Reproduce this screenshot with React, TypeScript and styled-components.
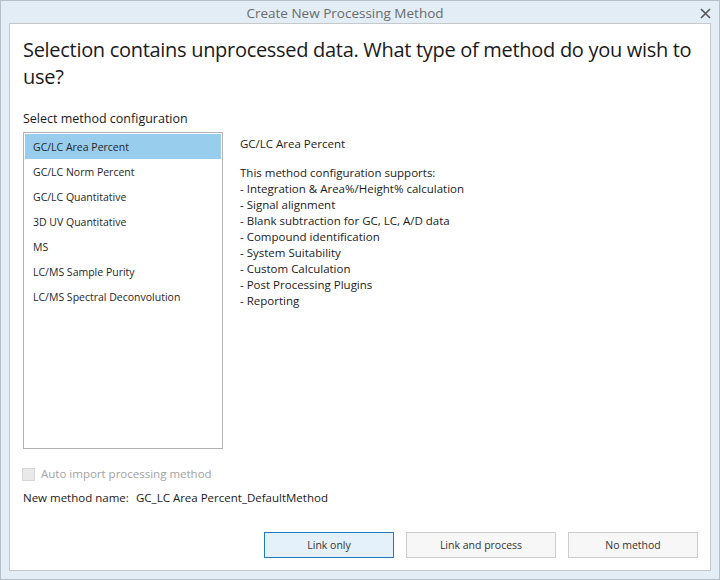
import React, { useState } from "react";
import styled, { createGlobalStyle } from "styled-components";

const GlobalStyle = createGlobalStyle`
  html, body {
    margin: 0;
    padding: 0;
    background: #ffffff;
  }
  body {
    font-family: "Open Sans", "Noto Sans", "DejaVu Sans", sans-serif;
    color: #1e1e1e;
  }
`;

const Window = styled.div`
  width: 720px;
  height: 580px;
  box-sizing: border-box;
  border: 1px solid #b7c0c8;
  background: #e2edf5;
  display: flex;
  flex-direction: column;
`;

const TitleBar = styled.div`
  height: 22px;
  flex: none;
  position: relative;
  display: flex;
  align-items: center;
  justify-content: center;
  padding-right: 30px;
  padding-top: 1px;
  box-sizing: border-box;
  font-size: 13.5px;
  color: #6b6b6b;
`;

const CloseButton = styled.button`
  position: absolute;
  right: 7px;
  top: 6px;
  width: 13px;
  height: 13px;
  padding: 0;
  border: none;
  background: transparent;
  display: flex;
  align-items: center;
  justify-content: center;
  cursor: pointer;
`;

const Panel = styled.div`
  flex: 1;
  margin: 0 8px 8px 8px;
  border: 1px solid #c6c9cc;
  background: #ffffff;
  display: flex;
  flex-direction: column;
  padding: 12px 12px 12px 13px;
`;

const Heading = styled.h1`
  margin: 0;
  font-size: 20px;
  font-weight: 400;
  line-height: 27px;
  color: #1a1a1a;
  letter-spacing: -0.3px;
`;

const SectionLabel = styled.div`
  margin-top: 20px;
  font-size: 12.5px;
  line-height: 18px;
  color: #1a1a1a;
`;

const Columns = styled.div`
  display: flex;
  gap: 17px;
  margin-top: 4px;
`;

const ListBox = styled.ul`
  list-style: none;
  margin: 0;
  width: 200px;
  height: 317px;
  box-sizing: border-box;
  border: 1px solid #b3b3b3;
  padding: 1px;
  flex: none;
`;

const ListItem = styled.li<{ $selected?: boolean }>`
  height: 25px;
  display: flex;
  align-items: center;
  padding-left: 8px;
  font-size: 10.5px;
  color: #262626;
  background: ${(p) => (p.$selected ? "#99cdee" : "transparent")};
  cursor: default;
`;

const Description = styled.div`
  padding-top: 4px;
  font-size: 11.5px;
  line-height: 16px;
  color: #1a1a1a;
`;

const DescTitle = styled.div`
  margin-bottom: 13px;
`;

const CheckRow = styled.label`
  display: flex;
  align-items: center;
  gap: 6px;
  margin-top: 17px;
  margin-left: -1px;
  font-size: 11.5px;
  line-height: 16px;
  color: #a3a3a3;
`;

const CheckBox = styled.span`
  width: 11px;
  height: 11px;
  border: 1px solid #d6d6d6;
  background: #e9e9e9;
  flex: none;
`;

const NameRow = styled.div`
  display: flex;
  margin-top: 8px;
  font-size: 11.5px;
  line-height: 16px;
  color: #1a1a1a;
`;

const NameLabel = styled.span`
  width: 113px;
  flex: none;
`;

const ButtonBar = styled.div`
  margin-top: auto;
  display: flex;
  justify-content: flex-end;
  gap: 12px;
`;

const DialogButton = styled.button<{ $primary?: boolean; $w: number }>`
  width: ${(p) => p.$w}px;
  height: 26px;
  box-sizing: border-box;
  font-family: inherit;
  font-size: 10.5px;
  color: #333333;
  background: ${(p) => (p.$primary ? "#e4f1fa" : "#f7f7f7")};
  border: 1px solid ${(p) => (p.$primary ? "#1f7bc1" : "#cdcdcd")};
  padding: 0;
  cursor: pointer;
`;

const methods = [
  "GC/LC Area Percent",
  "GC/LC Norm Percent",
  "GC/LC Quantitative",
  "3D UV Quantitative",
  "MS",
  "LC/MS Sample Purity",
  "LC/MS Spectral Deconvolution",
];

const features = [
  "Integration & Area%/Height% calculation",
  "Signal alignment",
  "Blank subtraction for GC, LC, A/D data",
  "Compound identification",
  "System Suitability",
  "Custom Calculation",
  "Post Processing Plugins",
  "Reporting",
];

const App: React.FC = () => {
  const [selected, setSelected] = useState(0);

  return (
    <>
      <GlobalStyle />
      <Window>
        <TitleBar>
          Create New Processing Method
          <CloseButton aria-label="Close">
            <svg width="11" height="11" viewBox="0 0 11 11">
              <path d="M1 1 L10 10 M10 1 L1 10" stroke="#555" strokeWidth="1.6" />
            </svg>
          </CloseButton>
        </TitleBar>
        <Panel>
          <Heading>
            Selection contains unprocessed data. What type of method do you wish to use?
          </Heading>
          <SectionLabel>Select method configuration</SectionLabel>
          <Columns>
            <ListBox>
              {methods.map((m, i) => (
                <ListItem key={m} $selected={i === selected} onClick={() => setSelected(i)}>
                  {m}
                </ListItem>
              ))}
            </ListBox>
            <Description>
              <DescTitle>GC/LC Area Percent</DescTitle>
              <div>This method configuration supports:</div>
              {features.map((f) => (
                <div key={f}>- {f}</div>
              ))}
            </Description>
          </Columns>
          <CheckRow>
            <CheckBox />
            Auto import processing method
          </CheckRow>
          <NameRow>
            <NameLabel>New method name:</NameLabel>
            <span>GC_LC Area Percent_DefaultMethod</span>
          </NameRow>
          <ButtonBar>
            <DialogButton $primary $w={130}>Link only</DialogButton>
            <DialogButton $w={150}>Link and process</DialogButton>
            <DialogButton $w={130}>No method</DialogButton>
          </ButtonBar>
        </Panel>
      </Window>
    </>
  );
};

export default App;
